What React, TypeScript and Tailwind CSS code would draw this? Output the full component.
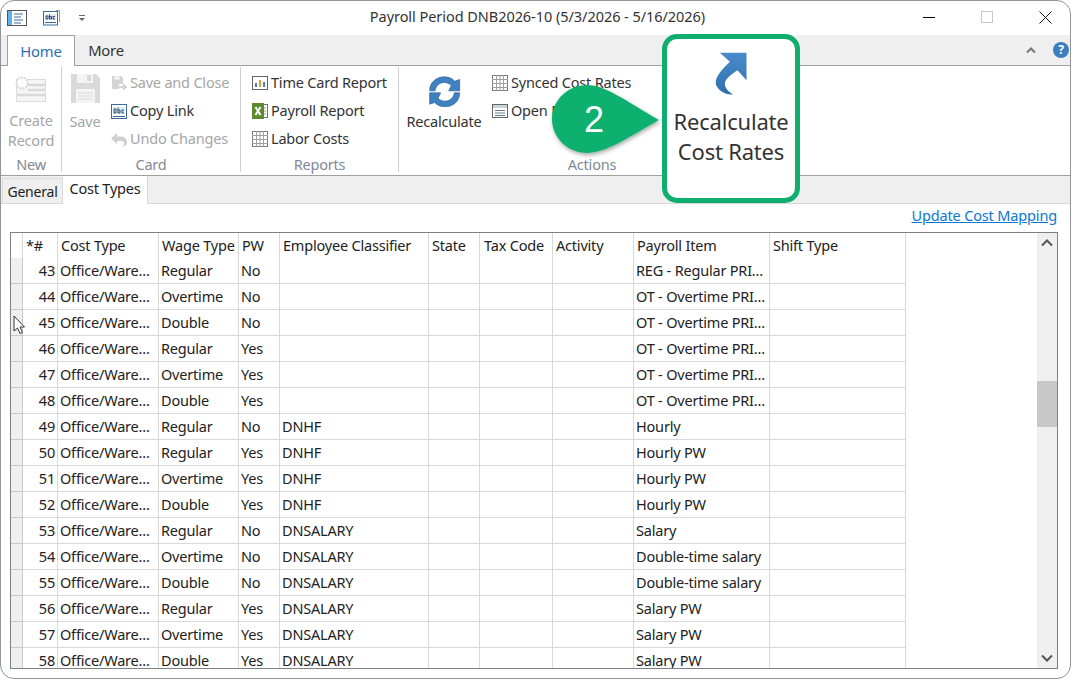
const rows: [number, string, string, string, string][] = [
  [43, "Regular", "No", "", "REG - Regular PRI..."],
  [44, "Overtime", "No", "", "OT - Overtime PRI..."],
  [45, "Double", "No", "", "OT - Overtime PRI..."],
  [46, "Regular", "Yes", "", "OT - Overtime PRI..."],
  [47, "Overtime", "Yes", "", "OT - Overtime PRI..."],
  [48, "Double", "Yes", "", "OT - Overtime PRI..."],
  [49, "Regular", "No", "DNHF", "Hourly"],
  [50, "Regular", "Yes", "DNHF", "Hourly PW"],
  [51, "Overtime", "Yes", "DNHF", "Hourly PW"],
  [52, "Double", "Yes", "DNHF", "Hourly PW"],
  [53, "Regular", "No", "DNSALARY", "Salary"],
  [54, "Overtime", "No", "DNSALARY", "Double-time salary"],
  [55, "Double", "No", "DNSALARY", "Double-time salary"],
  [56, "Regular", "Yes", "DNSALARY", "Salary PW"],
  [57, "Overtime", "Yes", "DNSALARY", "Salary PW"],
  [58, "Double", "Yes", "DNSALARY", "Salary PW"],
];

const gridCols = "grid grid-cols-[12px_35px_101px_80px_41px_149px_51px_73px_81px_136px_136px]";
const cell = "border-r border-[#d9d9d9] pl-[2px] whitespace-nowrap overflow-hidden";
const head = "border-r border-[#d9d9d9] pl-[3px] whitespace-nowrap overflow-hidden";

function GridIcon() {
  return (
    <svg width="16" height="16" viewBox="0 0 16 16" className="shrink-0">
      <rect x="0.5" y="0.5" width="15" height="15" fill="#fff" stroke="#7a7a7a" />
      <path d="M0 4.5H16M0 8.5H16M0 12.5H16M4.5 0V16M8 0V16M11.5 0V16" stroke="#a0a0a0" />
    </svg>
  );
}

function AbcIcon() {
  return (
    <svg width="16" height="15" viewBox="0 0 16 15" className="shrink-0">
      <rect x="0.5" y="0.5" width="15" height="14" fill="#fff" stroke="#3b6a98" />
      <rect x="2" y="3" width="12" height="7" fill="#dfe9f3" />
      <path d="M2 12.5H14" stroke="#3b6a98" />
      <path d="M3 5H5V9H3ZM7 3.5V9H9V6H7M13 6H11V9H13" fill="none" stroke="#2a4f75" strokeWidth="1" />
    </svg>
  );
}

function SmallBtn({ icon, label, off }: { icon: React.ReactNode; label: string; off?: boolean }) {
  return (
    <div className={`flex items-center gap-[3px] h-[28px] whitespace-nowrap ${off ? "text-[#a6a6a6]" : "text-[#333]"}`}>
      {icon}
      <span>{label}</span>
    </div>
  );
}

function GroupLabel({ children }: { children: React.ReactNode }) {
  return <div className="text-center text-[#7f8a94] leading-[20px] h-[20px]">{children}</div>;
}

function Sep() {
  return <div className="w-px h-[105px] bg-[#cfcfcf] shrink-0" />;
}

export default function App() {
  return (
    <div
      className="relative w-[1071px] h-[679px] overflow-hidden bg-white border border-[#8f959b] rounded-[14px] text-[14.5px] text-[#222] flex flex-col"
      style={{ fontFamily: '"Noto Sans", "Open Sans", sans-serif', letterSpacing: "-0.2px" }}
    >
      {/* Title bar */}
      <div className="h-[34px] shrink-0 grid grid-cols-[1fr_auto_1fr] items-center pb-[2px]">
        <div className="flex items-center pl-[6px] pt-[2px]">
          <svg width="21" height="17" viewBox="0 0 21 17">
            <rect x="0.5" y="0.5" width="19" height="15" fill="#fff" stroke="#555" />
            <rect x="1" y="1" width="4" height="14" fill="#5fb3e6" />
            <path d="M7 4H16M7 7H14M7 10H16M7 13H14" stroke="#3d6f9c" />
          </svg>
          <svg width="17" height="16" viewBox="0 0 17 16" className="ml-[15px]">
            <path d="M13 0.5H16.5V12" fill="none" stroke="#7f9fbd" />
            <rect x="0.5" y="1.5" width="14" height="13.5" fill="#fff" stroke="#3b6a98" />
            <rect x="2" y="4" width="11" height="6" fill="#dfe9f3" />
            <path d="M2 12.5H13" stroke="#3b6a98" />
            <path d="M3 6H5V9H3ZM6.5 4.5V9H8.5V6.5H6.5M12 6.5H10V9H12" fill="none" stroke="#2a4f75" strokeWidth="1" />
          </svg>
          <svg width="8" height="8" viewBox="0 0 8 8" className="ml-[18px]">
            <path d="M1 1.5H7" stroke="#666" />
            <path d="M1 4H7L4 7Z" fill="#666" />
          </svg>
        </div>
        <div className="text-center text-[#333] tracking-[-0.05px] pl-[4px]">Payroll Period DNB2026-10 (5/3/2026 - 5/16/2026)</div>
        <div className="flex items-center justify-end">
          <div className="w-[12px] h-[1px] bg-black" />
          <div className="ml-[46px] w-[12px] h-[12px] border border-[#c8c8c8]" />
          <svg width="13" height="13" viewBox="0 0 13 13" className="ml-[46px] mr-[18px]">
            <path d="M0.5 0.5L12.5 12.5M12.5 0.5L0.5 12.5" stroke="#111" strokeWidth="1" />
          </svg>
        </div>
      </div>

      {/* Ribbon tabs */}
      <div className="h-[31px] shrink-0 bg-[#efefef] border-b border-[#a0a0a0] flex items-end pl-[6px]">
        <div className="w-[68px] h-[31px] -mb-px bg-white border border-b-0 border-[#a0a0a0] flex items-center justify-center text-[#2f6db5] text-[14.8px] z-10">Home</div>
        <div className="w-[62px] h-[30px] flex items-center justify-center text-[#333] text-[14.8px]">More</div>
        <div className="ml-auto flex items-center h-[30px] mr-[1px]">
          <svg width="10" height="7" viewBox="0 0 10 7"><path d="M1 5.5L5 1.5L9 5.5" fill="none" stroke="#777" strokeWidth="2" /></svg>
          <div className="ml-[17px] w-[16px] h-[16px] rounded-full bg-[#3c7dc0] text-white text-[12px] font-bold flex items-center justify-center">?</div>
        </div>
      </div>

      {/* Ribbon body */}
      <div className="h-[110px] shrink-0 border-b border-[#a0a0a0] flex items-start pt-[1px]">
        {/* New */}
        <div className="w-[60px] h-[105px] flex flex-col">
          <div className="h-[87px] shrink-0 flex flex-col items-center pt-[9px] text-[#a6a6a6] leading-[20px]">
            <svg width="32" height="27" viewBox="0 0 32 27">
              <rect x="1.5" y="3.5" width="29" height="22" fill="#f5f5f5" stroke="#dcdcdc" />
              <path d="M13 9H30M13 14H30M2 19H30" stroke="#d9d9d9" strokeWidth="2.5" />
              <circle cx="7" cy="7" r="5.5" fill="#fff" stroke="#d8d8d8" strokeDasharray="2 1" strokeWidth="2" />
            </svg>
            <div className="mt-[7px] text-center">Create<br />Record</div>
          </div>
          <GroupLabel>New</GroupLabel>
        </div>
        <Sep />
        {/* Card */}
        <div className="w-[178px] h-[105px] flex flex-col">
          <div className="h-[87px] shrink-0 flex">
            <div className="w-[46px] flex flex-col items-center pt-[7px] text-[#a6a6a6]">
              <svg width="29" height="29" viewBox="0 0 29 29">
                <path d="M0 0H25L29 4V29H0Z" fill="#d9d9d9" />
                <rect x="6" y="0" width="16" height="9" fill="#f4f4f4" />
                <rect x="16" y="1" width="4" height="6" fill="#d9d9d9" />
                <rect x="5" y="15" width="19" height="14" fill="#f4f4f4" />
                <path d="M7 19H22M7 22H22M7 25H22" stroke="#d9d9d9" />
              </svg>
              <div className="mt-[8px]">Save</div>
            </div>
            <div className="flex flex-col pl-[3px] pt-[2px]">
              <SmallBtn
                off
                label="Save and Close"
                icon={
                  <svg width="16" height="16" viewBox="0 0 16 16" className="shrink-0">
                    <path d="M1 1H10L12 3V9H8V14H1Z" fill="#d4d4d4" />
                    <rect x="3.5" y="1.5" width="5" height="3" fill="#f5f5f5" />
                    <path d="M8 12H13M12 9.5L15 12L12 14.5" fill="none" stroke="#c8c8c8" strokeWidth="1.5" />
                  </svg>
                }
              />
              <SmallBtn label="Copy Link" icon={<AbcIcon />} />
              <SmallBtn
                off
                label="Undo Changes"
                icon={
                  <svg width="16" height="15" viewBox="0 0 16 15" className="shrink-0">
                    <path d="M6 1L0 6.5L6 12V9H10C12 9 13 10 13 11.5C13 13 12 14 11 14.5C14 14.5 16 13 16 10C16 7 14 4.5 10 4.5H6Z" fill="#d0d0d0" />
                  </svg>
                }
              />
            </div>
          </div>
          <GroupLabel>Card</GroupLabel>
        </div>
        <Sep />
        {/* Reports */}
        <div className="w-[157px] h-[105px] flex flex-col">
          <div className="h-[87px] shrink-0 flex flex-col pl-[11px] pt-[2px]">
            <SmallBtn
              label="Time Card Report"
              icon={
                <svg width="16" height="14" viewBox="0 0 16 14" className="shrink-0">
                  <rect x="0.5" y="0.5" width="15" height="13" fill="#fff" stroke="#666" />
                  <path d="M3 7H5V11H3Z" fill="#4a7eb5" />
                  <path d="M7 4H9V11H7Z" fill="#e89a2c" />
                  <path d="M11 6H13V11H11Z" fill="#4a7eb5" />
                </svg>
              }
            />
            <SmallBtn
              label="Payroll Report"
              icon={
                <svg width="16" height="16" viewBox="0 0 16 16" className="shrink-0">
                  <rect x="9" y="1.5" width="6.5" height="13" fill="#fff" stroke="#777" />
                  <path d="M10 5H14M10 8H14M10 11H14" stroke="#9a9a9a" />
                  <rect x="0" y="0" width="12" height="16" fill="#5c8a2d" />
                  <path d="M3.5 4L8.5 12M8.5 4L3.5 12" stroke="#fff" strokeWidth="2" />
                </svg>
              }
            />
            <SmallBtn label="Labor Costs" icon={<GridIcon />} />
          </div>
          <GroupLabel>Reports</GroupLabel>
        </div>
        <Sep />
        {/* Actions */}
        <div className="w-[386px] h-[105px] flex flex-col">
          <div className="h-[87px] shrink-0 flex">
            <div className="w-[90px] flex flex-col items-center pt-[8px] text-[#333]">
              <svg width="35" height="32" viewBox="20 15 105 95">
                <g fill="#3f80bf" stroke="#2a6299" strokeWidth="2">
                  <path d="M28 62C28 35 50 20 72 20C85 20 96 25 103 33L118 28V62H85L93 46C87 40 80 37 72 37C58 37 46 47 44 62Z" />
                  <path d="M28 62C28 35 50 20 72 20C85 20 96 25 103 33L118 28V62H85L93 46C87 40 80 37 72 37C58 37 46 47 44 62Z" transform="rotate(180 73 65)" />
                </g>
              </svg>
              <div className="mt-[4px]">Recalculate</div>
            </div>
            <div className="flex flex-col pl-[3px] pt-[2px]">
              <SmallBtn label="Synced Cost Rates" icon={<GridIcon />} />
              <SmallBtn
                label="Open Distribution"
                icon={
                  <svg width="16" height="14" viewBox="0 0 16 14" className="shrink-0">
                    <rect x="0.5" y="0.5" width="15" height="13" fill="#fff" stroke="#666" />
                    <rect x="1" y="1" width="14" height="3" fill="#c9d3dc" />
                    <path d="M3 6.5H13M3 9H13M3 11.5H13" stroke="#6c7c8c" />
                  </svg>
                }
              />
            </div>
          </div>
          <GroupLabel>Actions</GroupLabel>
        </div>
      </div>

      {/* Form tabs */}
      <div className="h-[28px] shrink-0 bg-[#efefef] border-b border-[#d8d8d8] flex items-end">
        <div className="w-[61px] h-[25px] ml-px border border-b-0 border-[#dcdcdc] flex items-center justify-center text-[14px] text-[#222]">General</div>
        <div className="w-[85px] h-[28px] -mb-px bg-white border-r border-[#d8d8d8] flex items-start pt-[2px] justify-center text-[#222] z-10">Cost Types</div>
      </div>

      {/* Link row */}
      <div className="h-[28px] shrink-0 flex items-center justify-end pr-[13px] pb-[4px]">
        <span className="text-[#0a78d7] underline tracking-[-0.15px]">Update Cost Mapping</span>
      </div>

      {/* Table */}
      <div className="ml-[9px] mr-[12px] h-[437px] border border-[#7e8088] flex overflow-hidden">
        <div className="flex-1 min-w-0 overflow-hidden">
          <div className={`${gridCols} h-[25px] leading-[25px]`}>
            <div className="border-r border-[#d9d9d9]" />
            <div className={head}>*#</div>
            <div className={head}>Cost Type</div>
            <div className={head}>Wage Type</div>
            <div className={head}>PW</div>
            <div className={head}>Employee Classifier</div>
            <div className={head}>State</div>
            <div className={`${head} pl-[4px]`}>Tax Code</div>
            <div className={head}>Activity</div>
            <div className={head}>Payroll Item</div>
            <div className={head}>Shift Type</div>
          </div>
          {rows.map((r) => (
            <div key={r[0]} className={`${gridCols} h-[26px] leading-[24px]`}>
              <div className="bg-[#efefef] border-r border-b border-[#c9c9c9]" />
              <div className={`${cell} border-b text-right pr-[2px]`}>{r[0]}</div>
              <div className={`${cell} border-b`}>Office/Ware...</div>
              <div className={`${cell} border-b`}>{r[1]}</div>
              <div className={`${cell} border-b`}>{r[2]}</div>
              <div className={`${cell} border-b`}>{r[3]}</div>
              <div className={`${cell} border-b`} />
              <div className={`${cell} border-b`} />
              <div className={`${cell} border-b`} />
              <div className={`${cell} border-b`}>{r[4]}</div>
              <div className={`${cell} border-b`} />
            </div>
          ))}
        </div>
        {/* Scrollbar */}
        <div className="w-[20px] shrink-0 bg-[#efefef] flex flex-col items-center">
          <svg width="12" height="8" viewBox="0 0 12 8" className="mt-[6px]">
            <path d="M1 6.5L6 1.5L11 6.5" fill="none" stroke="#555" strokeWidth="2" />
          </svg>
          <div className="mt-[134px] w-full h-[46px] bg-[#c8c8c8]" />
          <svg width="12" height="8" viewBox="0 0 12 8" className="mt-auto mb-[6px]">
            <path d="M1 1.5L6 6.5L11 1.5" fill="none" stroke="#555" strokeWidth="2" />
          </svg>
        </div>
      </div>

      {/* Mouse cursor */}
      <svg width="13" height="20" viewBox="0 0 13 20" className="absolute left-[12px] top-[314px]">
        <path d="M1 1V16L4.5 13L7 18.5L9.5 17.5L7 12H11.5Z" fill="#fff" stroke="#333" strokeWidth="1" />
      </svg>

      {/* Highlight box */}
      <div className="absolute left-[661px] top-[33px] w-[138px] h-[169px] bg-white border-[5px] border-[#10ae6e] rounded-[15px] flex flex-col items-center">
        <svg width="37" height="45" viewBox="40 20 110 135" className="mt-[12px]">
          <defs>
            <linearGradient id="arrow" x1="0" y1="0" x2="0" y2="1">
              <stop offset="0" stopColor="#4a8ccb" />
              <stop offset="1" stopColor="#2f6fae" />
            </linearGradient>
          </defs>
          <path d="M60 25H140V108L113 78C95 90 75 105 75 118C75 132 88 143 100 150C75 152 55 138 49 122C44 105 55 85 90 52Z" fill="url(#arrow)" />
        </svg>
        <div className="mt-[10px] text-center text-[22px] leading-[30px] text-[#333]">Recalculate<br />Cost Rates</div>
      </div>

      {/* Callout */}
      <div className="absolute left-[545px] top-[80px] w-[120px] h-[80px]">
        <svg width="120" height="80" viewBox="0 0 120 80" className="absolute inset-0">
          <defs>
            <filter id="s" x="-20%" y="-20%" width="140%" height="150%">
              <feDropShadow dx="1" dy="2" stdDeviation="2" floodColor="#000" floodOpacity="0.35" />
            </filter>
          </defs>
          <path d="M41 4C59 4 80 20 113 39C80 58 59 72 41 72C22 72 6 57 6 38C6 19 22 4 41 4Z" fill="#10b06e" filter="url(#s)" />
        </svg>
        <div className="absolute left-[23px] top-[18px] w-[50px] text-center text-white text-[36px] leading-[42px]" style={{ fontFamily: '"Liberation Sans", sans-serif', letterSpacing: 0 }}>2</div>
      </div>
    </div>
  );
}
